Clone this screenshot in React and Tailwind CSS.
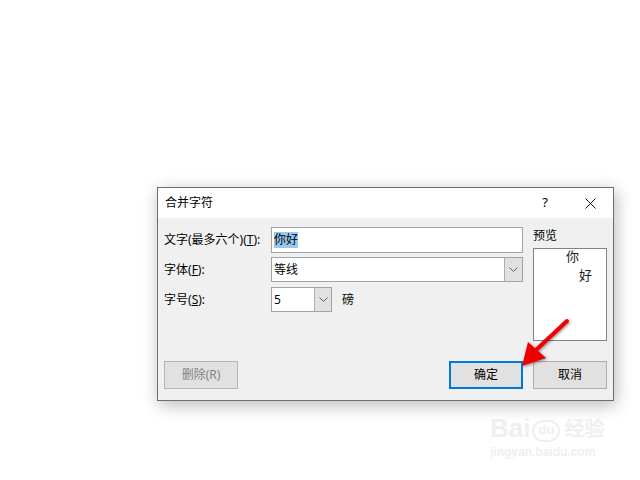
import React from "react";

const font = "font-['Noto_Sans','Noto_Sans_CJK_SC',sans-serif]";

function Chevron() {
  return (
    <svg width="9" height="6" viewBox="0 0 9 6">
      <polyline points="0.5,0.5 4.5,4.5 8.5,0.5" fill="none" stroke="#606060" strokeWidth="1" />
    </svg>
  );
}

function Label({ text, hotkey }) {
  return (
    <div className="w-[107px] text-[12px] text-black">
      {text}(<span className="underline">{hotkey}</span>):
    </div>
  );
}

export default function App() {
  return (
    <div className={`relative w-[640px] h-[480px] bg-white overflow-hidden pt-[187px] pl-[157px] ${font}`}>
      {/* Dialog */}
      <div className="w-[457px] h-[214px] border border-[#6e6e6e] bg-[#f0f0f0] flex flex-col shadow-[2px_4px_16px_rgba(0,0,0,0.28)]">
        {/* Title bar */}
        <div className="h-[30px] bg-white flex items-center pl-[7px] text-[12px] text-black">
          <span>合并字符</span>
          <div className="ml-auto flex items-center pr-[17px]">
            <span className="w-[14px] text-center text-[13px] -ml-[2px]">?</span>
            <svg className="ml-[33px]" width="11" height="11" viewBox="0 0 11 11">
              <path d="M0.5 0.5 L10.5 10.5 M10.5 0.5 L0.5 10.5" stroke="#111" strokeWidth="1" />
            </svg>
          </div>
        </div>

        {/* Body */}
        <div className="flex-1 flex flex-col">
          <div className="flex pl-[6px] pr-[6px] pt-[9px]">
            {/* Form */}
            <div className="w-[359px] flex flex-col">
              <div className="h-[26px] flex items-center">
                <Label text="文字(最多六个)" hotkey="T" />
                <div className="w-[252px] h-[26px] border border-[#a3a3a3] bg-white flex items-center pl-[2px] text-[12px]">
                  <span className="bg-[#99c9ef] leading-[16px]">你好</span>
                </div>
              </div>
              <div className="h-[25px] mt-[4px] flex items-center">
                <Label text="字体" hotkey="F" />
                <div className="w-[252px] h-[25px] border border-[#a3a3a3] bg-white flex items-center text-[12px]">
                  <span className="pl-[2px] flex-1">等线</span>
                  <div className="w-[18px] h-full bg-[#e1e1e1] border-l border-[#adadad] flex items-center justify-center">
                    <Chevron />
                  </div>
                </div>
              </div>
              <div className="h-[25px] mt-[5px] flex items-center">
                <Label text="字号" hotkey="S" />
                <div className="w-[61px] h-[25px] border border-[#a3a3a3] bg-white flex items-center text-[12px]">
                  <span className="pl-[2px] flex-1">5</span>
                  <div className="w-[17px] h-full bg-[#e1e1e1] border-l border-[#adadad] flex items-center justify-center">
                    <Chevron />
                  </div>
                </div>
                <span className="ml-[10px] text-[12px]">磅</span>
              </div>
            </div>

            {/* Preview */}
            <div className="ml-[10px] w-[74px] flex flex-col">
              <div className="mt-[2px] h-[14px] leading-[14px] text-[12px]">预览</div>
              <div className="mt-[5px] h-[93px] border border-[#828282] bg-white flex flex-col pl-[32px] text-[13px] leading-[17px] text-[#222]">
                <span className="-mt-[1px]">你</span>
                <span className="ml-[13px] mt-[2px]">好</span>
              </div>
            </div>
          </div>

          {/* Buttons */}
          <div className="mt-[20px] flex pl-[6px] pr-[6px] text-[12px]">
            <div className="w-[74px] h-[28px] border border-[#b5b5b5] bg-[#e1e1e1] text-[#838383] flex items-center justify-center">
              删除(R)
            </div>
            <div className="ml-auto w-[74px] h-[28px] border-2 border-[#0078d7] bg-[#e1e1e1] text-black flex items-center justify-center">
              确定
            </div>
            <div className="ml-[10px] w-[74px] h-[28px] border border-[#adadad] bg-[#e1e1e1] text-black flex items-center justify-center">
              取消
            </div>
          </div>
        </div>
      </div>

      {/* Red annotation arrow */}
      <svg className="absolute left-0 top-0" width="640" height="480" viewBox="0 0 640 480">
        <defs>
          <filter id="sh" x="-50%" y="-50%" width="200%" height="200%">
            <feDropShadow dx="1" dy="1" stdDeviation="1.5" floodColor="#000" floodOpacity="0.45" />
          </filter>
        </defs>
        <g filter="url(#sh)">
          <line x1="567" y1="321" x2="536" y2="350" stroke="#ee0000" strokeWidth="4" strokeLinecap="round" />
          <polygon points="522,366 528,342 546,358" fill="#ee0000" />
        </g>
      </svg>

      {/* Baidu watermark */}
      <div className="absolute left-[490px] top-[414px] flex flex-col items-start text-[#efefef] font-['Liberation_Sans','Noto_Sans_CJK_SC',sans-serif]">
        <div className="flex items-end">
          <span className="text-[26px] leading-[28px] font-bold">Bai</span>
          <span className="ml-[2px] w-[28px] h-[22px] rounded-full border-2 border-[#efefef] text-[13px] leading-[16px] text-center font-bold">du</span>
          <span className="ml-[4px] text-[20px] leading-[26px] font-bold">经验</span>
        </div>
        <span className="text-[12px] leading-[16px] mt-[2px] font-bold">jingyan.baidu.com</span>
      </div>
    </div>
  );
}
